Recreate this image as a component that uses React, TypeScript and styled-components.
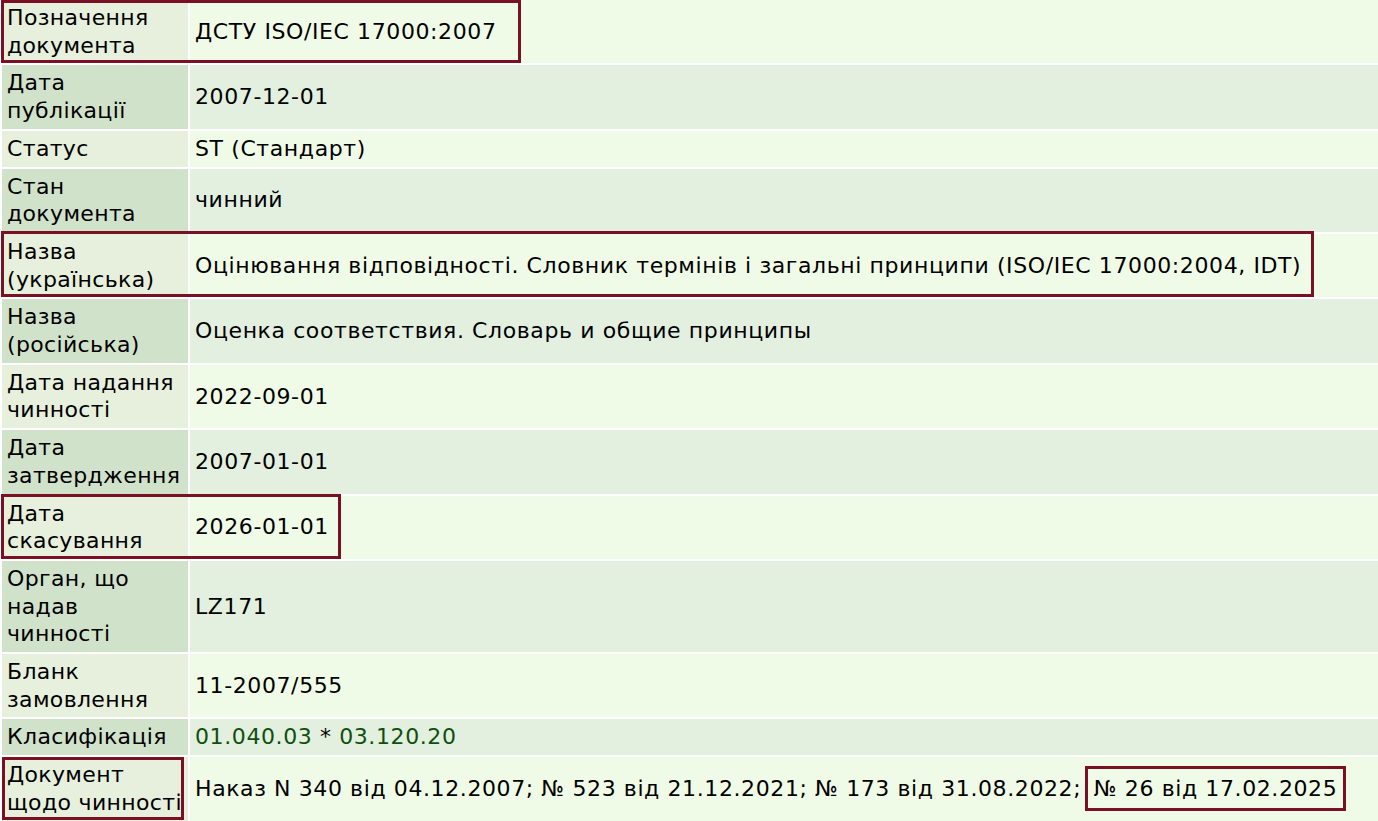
import React from "react";
import styled, { createGlobalStyle } from "styled-components";

const GlobalStyle = createGlobalStyle`
  html, body {
    margin: 0;
    padding: 0;
    background: #ffffff;
    overflow: hidden;
  }
  body {
    font-family: "DejaVu Sans", Verdana, sans-serif;
  }
`;

const Page = styled.div`
  position: relative;
  width: 1378px;
  height: 821px;
  overflow: hidden;
`;

const Table = styled.table`
  width: 1380px;
  margin-top: -2px;
  border-collapse: separate;
  border-spacing: 2px;
  font-size: 22px;
  letter-spacing: 0.6px;
  line-height: 27.7px;
  color: #000;
`;

const Label = styled.td<{ $odd: boolean }>`
  width: 180px;
  padding: 4px 1px 4px 5px;
  letter-spacing: 0.35px;
  vertical-align: middle;
  background: ${({ $odd }) => ($odd ? "#d1e2cb" : "#e7f0dc")};
`;

const Value = styled.td<{ $odd: boolean }>`
  padding: 4px 5px;
  vertical-align: middle;
  white-space: nowrap;
  background: ${({ $odd }) => ($odd ? "#e3f0e0" : "#f0fbe7")};
`;

const Code = styled.span`
  color: #0f4f0f;
`;

const Marked = styled.span`
  padding: 7px 6px 7px 6px;
  margin-left: -4px;
  border: 3px solid #7a1024;
`;

const Frame = styled.div<{
  $top: number;
  $left: number;
  $width: number;
  $height: number;
}>`
  position: absolute;
  top: ${({ $top }) => $top}px;
  left: ${({ $left }) => $left}px;
  width: ${({ $width }) => $width}px;
  height: ${({ $height }) => $height}px;
  box-sizing: border-box;
  border: 3px solid #7a1024;
  pointer-events: none;
`;

type Row = {
  label: string;
  value: React.ReactNode;
};

const rows: Row[] = [
  { label: "Позначення документа", value: "ДСТУ ISO/IEC 17000:2007" },
  { label: "Дата публікації", value: "2007-12-01" },
  { label: "Статус", value: "ST (Стандарт)" },
  { label: "Стан документа", value: "чинний" },
  {
    label: "Назва (українська)",
    value:
      "Оцінювання відповідності. Словник термінів і загальні принципи (ISO/IEC 17000:2004, IDT)",
  },
  { label: "Назва (російська)", value: "Оценка соответствия. Словарь и общие принципы" },
  { label: "Дата надання чинності", value: "2022-09-01" },
  { label: "Дата затвердження", value: "2007-01-01" },
  { label: "Дата скасування", value: "2026-01-01" },
  { label: "Орган, що надав чинності", value: "LZ171" },
  { label: "Бланк замовлення", value: "11-2007/555" },
  {
    label: "Класифікація",
    value: (
      <>
        <Code>01.040.03</Code> * <Code>03.120.20</Code>
      </>
    ),
  },
  {
    label: "Документ щодо чинності",
    value: (
      <>
        Наказ N 340 від 04.12.2007; № 523 від 21.12.2021; № 173 від 31.08.2022;{" "}
        <Marked>№ 26 від 17.02.2025</Marked>
      </>
    ),
  },
];

// annotation frames drawn over the table
const marks = [
  { top: 0, left: 1, width: 520, height: 63 },
  { top: 231, left: 1, width: 1313, height: 66 },
  { top: 494, left: 1, width: 340, height: 65 },
  { top: 757, left: 2, width: 182, height: 63 },
];

export default function App() {
  return (
    <>
      <GlobalStyle />
      <Page>
        <Table>
          <tbody>
            {rows.map((row, i) => (
              <tr key={row.label}>
                <Label $odd={i % 2 === 1}>{row.label}</Label>
                <Value $odd={i % 2 === 1}>{row.value}</Value>
              </tr>
            ))}
          </tbody>
        </Table>
        {marks.map((m, i) => (
          <Frame
            key={i}
            $top={m.top}
            $left={m.left}
            $width={m.width}
            $height={m.height}
          />
        ))}
      </Page>
    </>
  );
}
